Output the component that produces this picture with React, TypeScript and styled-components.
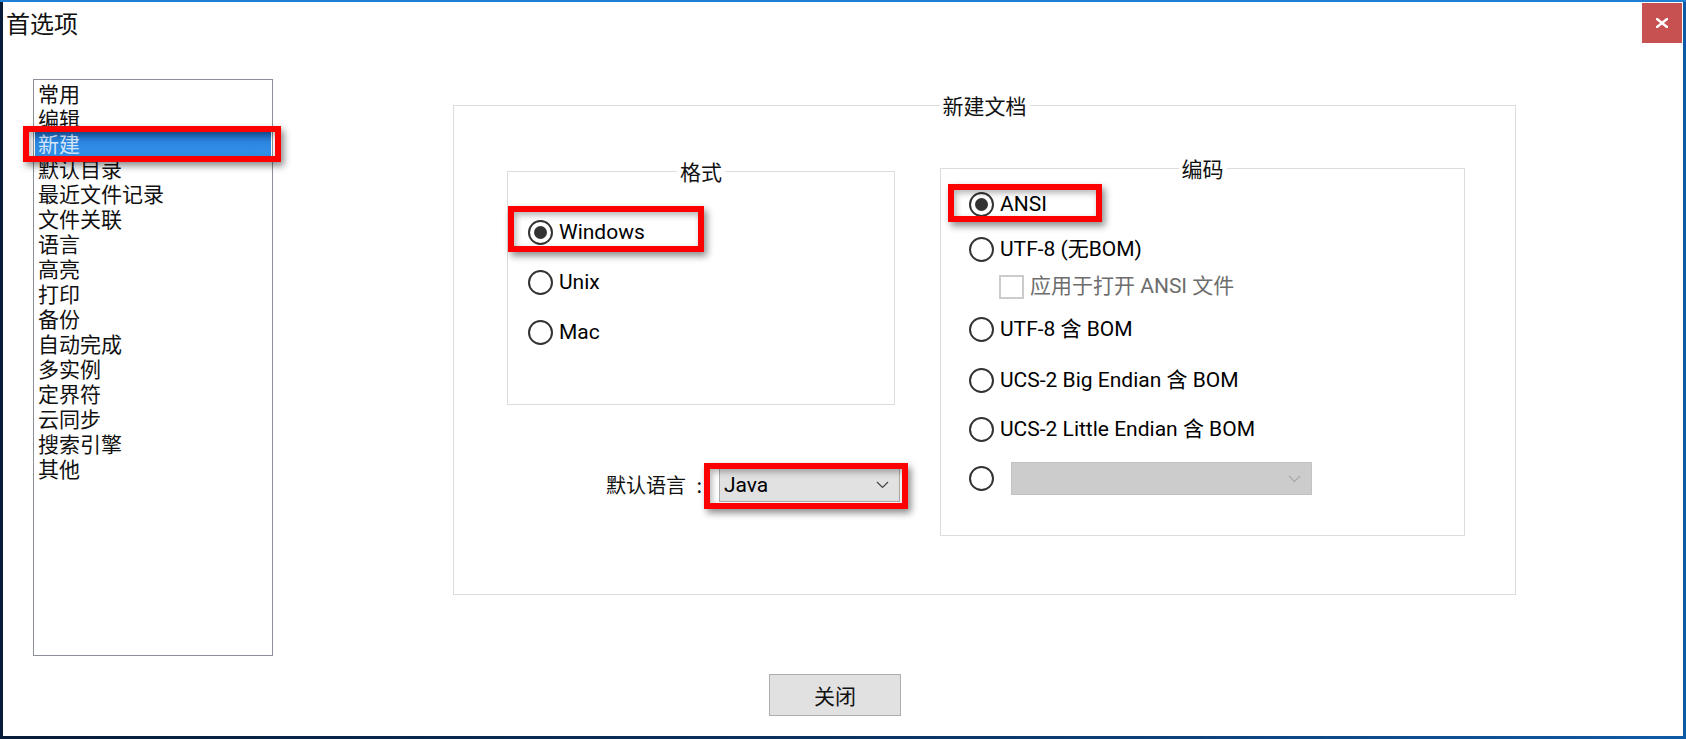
import styled, { createGlobalStyle, css } from "styled-components";

const UI_FONT = `"Roboto", "Noto Sans CJK SC", sans-serif`;
const CJK_FONT = `"Noto Sans CJK SC", "Roboto", sans-serif`;

const GlobalStyle = createGlobalStyle`
  html, body { margin: 0; padding: 0; }
  body { background: #08213f; font-family: ${UI_FONT}; color: #000; overflow: hidden; }
  *, *::before, *::after { box-sizing: border-box; }
`;

const NAV = [
  "常用",
  "编辑",
  "新建",
  "默认目录",
  "最近文件记录",
  "文件关联",
  "语言",
  "高亮",
  "打印",
  "备份",
  "自动完成",
  "多实例",
  "定界符",
  "云同步",
  "搜索引擎",
  "其他",
];

export default function App() {
  return (
    <Desktop>
      <GlobalStyle />
      <Window>
        <TitleBar>
          <Title>首选项</Title>
          <CloseButton aria-label="关闭">
            <svg width="12" height="10" viewBox="0 0 12 10">
              <path d="M1 1 L11 9 M11 1 L1 9" stroke="#fff" strokeWidth="2.4" strokeLinecap="square" />
            </svg>
          </CloseButton>
        </TitleBar>

        <Body>
          <ListBox>
            {NAV.map((name) => (
              <ListItem key={name} $selected={name === "新建"}>
                {name}
                {name === "新建" && <Callout $x={-12} $y={-5} $w={258} $h={36} />}
              </ListItem>
            ))}
          </ListBox>

          <Content>
            <Group $w={1063} $h={502}>
              <GroupTitle>新建文档</GroupTitle>
              <GroupBody $pad="39px 0 0 53px">
                <Columns>
                  <LeftCol>
                    <Group $w={388} $h={246}>
                      <GroupTitle>格式</GroupTitle>
                      <GroupBody $pad="0 0 0 20px">
                        <Option $gap={37}>
                          <Radio $checked />
                          Windows
                          <Callout $x={-20} $y={-14} $w={196} $h={46} />
                        </Option>
                        <Option $gap={25}>
                          <Radio />
                          Unix
                        </Option>
                        <Option $gap={25}>
                          <Radio />
                          Mac
                        </Option>
                      </GroupBody>
                    </Group>
                    <LangRow>
                      <LangLabel>默认语言 :</LangLabel>
                      <Combo $w={181} $h={34}>
                        Java
                        <Chevron />
                        <Callout $x={-16} $y={-6} $w={204} $h={46} />
                      </Combo>
                    </LangRow>
                  </LeftCol>

                  <Group $w={525} $h={380}>
                    <GroupTitle>编码</GroupTitle>
                    <GroupBody $pad="0 0 0 28px">
                      <Option $gap={12}>
                        <Radio $checked />
                        ANSI
                        <Callout $x={-21} $y={-8} $w={154} $h={38} />
                      </Option>
                      <Option $gap={20}>
                        <Radio />
                        UTF-8 (无BOM)
                      </Option>
                      <Option $gap={12} $indent={30} $disabled>
                        <CheckBox />
                        应用于打开 ANSI 文件
                      </Option>
                      <Option $gap={18}>
                        <Radio />
                        UTF-8 含 BOM
                      </Option>
                      <Option $gap={26}>
                        <Radio />
                        UCS-2 Big Endian 含 BOM
                      </Option>
                      <Option $gap={24}>
                        <Radio />
                        UCS-2 Little Endian 含 BOM
                      </Option>
                      <Option $gap={20} $tall>
                        <Radio />
                        <Combo $w={301} $h={33} $disabled>
                          <span />
                          <Chevron $disabled />
                        </Combo>
                      </Option>
                    </GroupBody>
                  </Group>
                </Columns>
              </GroupBody>
            </Group>
          </Content>
        </Body>

        <Footer>
          <Button>关闭</Button>
        </Footer>
      </Window>
    </Desktop>
  );
}

function Chevron({ $disabled }: { $disabled?: boolean }) {
  return (
    <svg width="13" height="8" viewBox="0 0 13 8">
      <path d="M1 1 L6.5 6.5 L12 1" fill="none" stroke={$disabled ? "#a8a8a8" : "#444"} strokeWidth="1.2" />
    </svg>
  );
}

const Desktop = styled.div`
  width: 1686px;
  height: 739px;
  border-top: 2px solid #1f7fd3;
  padding: 0 3px 3px;
  background: linear-gradient(90deg, #061c38 0%, #0b3566 55%, #0f5aa5 100%);
`;

const Window = styled.div`
  width: 1680px;
  height: 734px;
  background: #fff;
  display: flex;
  flex-direction: column;
`;

const TitleBar = styled.header`
  height: 44px;
  flex: none;
  display: flex;
  justify-content: space-between;
  align-items: flex-start;
`;

const Title = styled.h1`
  margin: 0;
  padding: 7px 0 0 3px;
  font: 400 24px/28px ${CJK_FONT};
  color: #111;
`;

const CloseButton = styled.button`
  width: 40px;
  height: 40px;
  margin: 1px 1px 0 0;
  padding: 0;
  border: 0;
  background: #c75050;
  display: grid;
  place-items: center;
`;

const Body = styled.div`
  display: flex;
  align-items: flex-start;
  padding-left: 30px;
`;

const ListBox = styled.ul`
  flex: none;
  width: 240px;
  height: 577px;
  margin: 33px 0 0;
  padding: 1px 0 0;
  list-style: none;
  border: 1px solid #8b9098;
`;

const ListItem = styled.li<{ $selected?: boolean }>`
  position: relative;
  height: 25px;
  margin: 0 1px;
  padding-left: 3px;
  font: 400 21px/25px ${CJK_FONT};
  color: #111;
  ${(p) =>
    p.$selected &&
    css`
      background: linear-gradient(180deg, #1b62b6 0%, #2c86e0 45%, #3391ea 100%);
      color: #d3e6f9;
    `}
`;

const Callout = styled.span<{ $x: number; $y: number; $w: number; $h: number }>`
  position: absolute;
  left: ${(p) => p.$x}px;
  top: ${(p) => p.$y}px;
  width: ${(p) => p.$w}px;
  height: ${(p) => p.$h}px;
  border: 6px solid #ff0000;
  box-shadow: 3px 4px 7px rgba(0, 0, 0, 0.45), inset 2px 3px 6px rgba(0, 0, 0, 0.3);
  pointer-events: none;
  z-index: 2;
`;

const Content = styled.div`
  margin: 47px 0 0 180px;
`;

const Group = styled.fieldset<{ $w: number; $h: number }>`
  flex: none;
  width: ${(p) => p.$w}px;
  height: ${(p) => p.$h}px;
  min-width: 0;
  margin: 0;
  padding: 0;
  border: 1px solid #dcdcdc;
`;

const GroupTitle = styled.legend`
  margin-inline: auto;
  padding: 0 3px;
  font: 400 21px/24px ${CJK_FONT};
  color: #111;
`;

const GroupBody = styled.div<{ $pad: string }>`
  display: flex;
  flex-direction: column;
  padding: ${(p) => p.$pad};
`;

const Columns = styled.div`
  display: flex;
  align-items: flex-start;
  gap: 45px;
`;

const LeftCol = styled.div`
  flex: none;
  width: 388px;
  display: flex;
  flex-direction: column;
  padding-top: 3px;
`;

const Option = styled.label<{ $gap?: number; $indent?: number; $disabled?: boolean; $tall?: boolean }>`
  position: relative;
  display: flex;
  align-items: center;
  gap: ${(p) => (p.$tall ? 17 : 6)}px;
  width: fit-content;
  height: ${(p) => (p.$tall ? 33 : 25)}px;
  margin-top: ${(p) => p.$gap ?? 0}px;
  margin-left: ${(p) => p.$indent ?? 0}px;
  font: 400 21px/25px ${UI_FONT};
  color: ${(p) => (p.$disabled ? "#6d6d6d" : "#000")};
  white-space: nowrap;
`;

const Radio = styled.span<{ $checked?: boolean }>`
  flex: none;
  width: 25px;
  height: 25px;
  border-radius: 50%;
  border: 2px solid #333;
  display: grid;
  place-items: center;
  &::after {
    content: "";
    width: 13px;
    height: 13px;
    border-radius: 50%;
    background: ${(p) => (p.$checked ? "#333" : "transparent")};
  }
`;

const CheckBox = styled.span`
  flex: none;
  width: 25px;
  height: 24px;
  border: 2px solid #cccccc;
  background: #fff;
`;

const LangRow = styled.div`
  display: flex;
  align-items: center;
  justify-content: flex-end;
  width: 393px;
  margin-top: 63px;
  gap: 17px;
`;

const LangLabel = styled.span`
  flex: none;
  font: 400 20px/24px ${CJK_FONT};
  word-spacing: 6px;
  color: #111;
`;

const Combo = styled.div<{ $w: number; $h: number; $disabled?: boolean }>`
  position: relative;
  flex: none;
  display: flex;
  align-items: center;
  justify-content: space-between;
  width: ${(p) => p.$w}px;
  height: ${(p) => p.$h}px;
  padding: 0 10px 0 4px;
  font: 400 21px/25px ${UI_FONT};
  color: #000;
  background: ${(p) => (p.$disabled ? "#cccccc" : "#e1e1e1")};
  border: 1px solid ${(p) => (p.$disabled ? "#c2c2c2" : "#adadad")};
`;

const Footer = styled.div`
  margin-top: 18px;
  padding-left: 766px;
`;

const Button = styled.button`
  width: 132px;
  height: 42px;
  padding: 0;
  background: #e1e1e1;
  border: 1px solid #adadad;
  font: 400 21px/24px ${CJK_FONT};
  color: #111;
`;
